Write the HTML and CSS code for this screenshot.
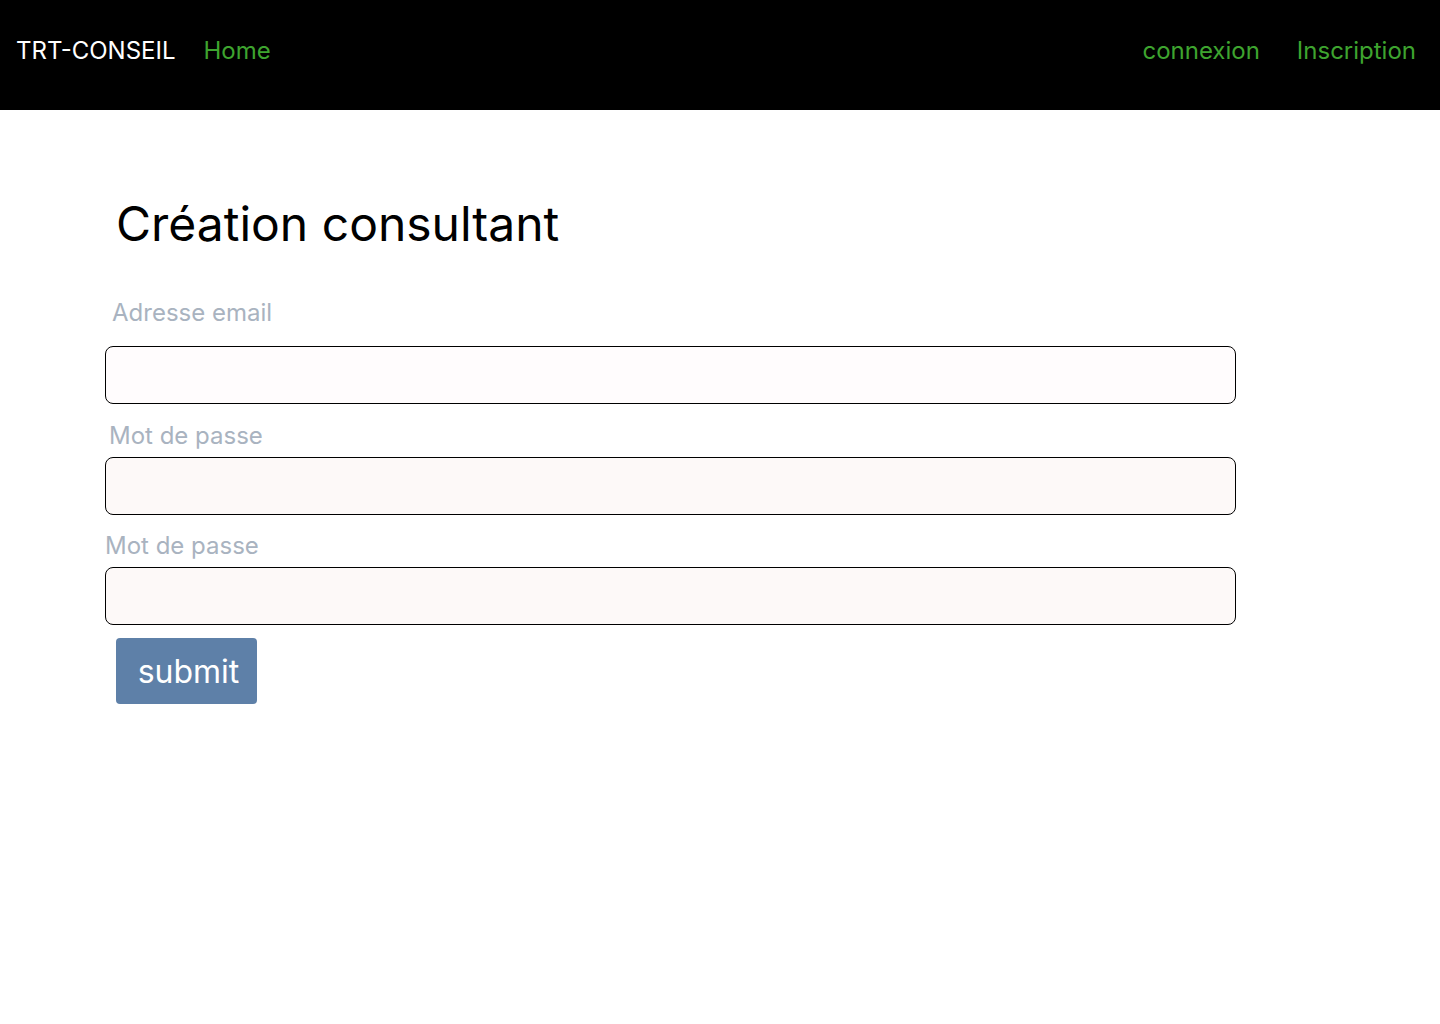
FILE: index.html
```html
<!DOCTYPE html>
<html lang="fr">
<head>
<meta charset="utf-8">
<title>TRT-CONSEIL</title>
<link rel="stylesheet" href="styles.css">
</head>
<body>
<nav class="navbar">
  <div class="nav-left">
    <span class="brand">TRT-CONSEIL</span>
    <a class="nav-link" href="#">Home</a>
  </div>
  <div class="nav-right">
    <a class="nav-link" href="#">connexion</a>
    <a class="nav-link" href="#">Inscription</a>
  </div>
</nav>
<main class="content">
  <h1 class="title">Création consultant</h1>
  <form class="form">
    <label class="label label-email">Adresse email</label>
    <input class="field field-email" type="email">
    <label class="label label-pass1">Mot de passe</label>
    <input class="field" type="password">
    <label class="label label-pass2">Mot de passe</label>
    <input class="field" type="password">
    <button class="submit" type="button">submit</button>
  </form>
</main>
</body>
</html>
```
FILE: styles.css
```css
* { box-sizing: border-box; }
body {
  margin: 0;
  font-family: Inter, "Noto Sans", sans-serif;
  background: #fff;
}
.navbar {
  height: 110px;
  background: #000;
  display: flex;
  align-items: center;
  justify-content: space-between;
  padding: 0 24px 10px 16px;
}
.nav-left, .nav-right {
  display: flex;
  align-items: center;
  gap: 28px;
}
.nav-right { gap: 37px; }
.brand {
  color: #fff;
  font-size: 24px;
}
.nav-link {
  color: #3ea42f;
  text-decoration: none;
  font-size: 24px;
}
.content {
  padding: 85px 0 0 105px;
}
.title {
  margin: 0 0 0 11px;
  font-weight: 400;
  font-size: 48px;
  line-height: 58px;
  color: #000;
}
.form {
  display: flex;
  flex-direction: column;
  align-items: flex-start;
  margin-top: 45px;
}
.label {
  color: #a9b3c0;
  font-size: 24px;
  line-height: 30px;
}
.label-email { margin-left: 7px; margin-bottom: 18px; }
.label-pass1 { margin-left: 4px; margin-top: 17px; margin-bottom: 6px; }
.label-pass2 { margin-left: 0; margin-top: 16px; margin-bottom: 6px; }
.field {
  width: 1131px;
  height: 58px;
  border: 1px solid #000;
  border-radius: 8px;
  background: #fdf9f8;
  padding: 0 12px;
  font-size: 20px;
}
.field-email { background: #fffcfd; }
.submit {
  margin: 13px 0 0 11px;
  width: 141px;
  height: 66px;
  background: #5e80a8;
  color: #fff;
  border: none;
  border-radius: 4px;
  font-family: Inter, "Noto Sans", sans-serif;
  font-size: 32px;
  padding: 0 0 0 4px;
}
```
